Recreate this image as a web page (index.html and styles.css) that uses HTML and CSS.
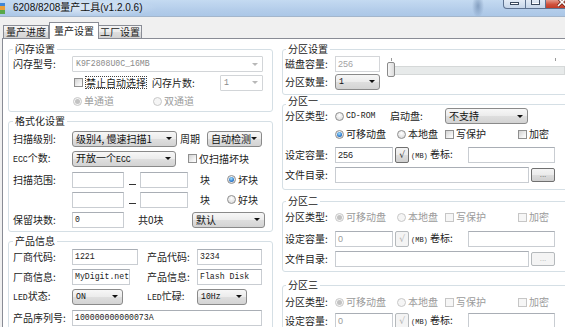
FILE: index.html
```html
<!DOCTYPE html>
<html lang="zh-CN">
<head>
    <meta charset="UTF-8">
    <meta name="viewport" content="width=device-width, initial-scale=1.0">
    <title>6208/8208量产工具(v1.2.0.6)</title>
    <link rel="stylesheet" href="styles.css">
</head>
<body>
<div class="window">
    <div class="titlebar">
        <span class="app-icon"></span>
        <span class="title">6208/8208量产工具(v1.2.0.6)</span>
        <div class="caption">
            <span class="cap cap-min"><i></i></span>
            <span class="cap cap-max"><i></i></span>
            <span class="cap cap-close">
                <svg width="10" height="8" viewBox="0 0 10 8"><path d="M1 -2 L9 6 M9 -2 L1 6" stroke="#5a1a10" stroke-width="3"/><path d="M1 -2 L9 6 M9 -2 L1 6" stroke="#fff" stroke-width="1.6"/></svg>
            </span>
        </div>
    </div>

    <div class="tabs">
        <span class="tab tab-1">量产进度</span>
        <span class="tab tab-2 active">量产设置</span>
        <span class="tab tab-3">工厂设置</span>
    </div>

    <div class="panel">
        <!-- 左侧 -->
        <div class="col col-left">
            <div class="group g-flash">
                <span class="legend">闪存设置</span>
                <div class="row h18">
                    <span class="key">闪存型号:</span>
                    <span class="combo off w191"><span class="mono">K9F2808U0C_16MB</span><i class="arrow"></i></span>
                </div>
                <div class="row h19">
                    <span class="key"></span>
                    <span class="opt w80"><i class="chk ml2"></i><span class="focus">禁止自动选择</span></span>
                    <span class="txt w68">闪存片数:</span>
                    <span class="combo off w43"><span class="mono">1</span><i class="arrow"></i></span>
                </div>
                <div class="row h18">
                    <span class="key"></span>
                    <span class="opt w81 dis"><i class="rad on ml1"></i>单通道</span>
                    <span class="opt dis"><i class="rad"></i>双通道</span>
                </div>
            </div>

            <div class="group g-format">
                <span class="legend">格式化设置</span>
                <div class="row h19">
                    <span class="key">扫描级别:</span>
                    <span class="combo w105">级别4, 慢速扫描1<i class="arrow"></i></span>
                    <span class="txt w30 pl3">周期</span>
                    <span class="combo w55">自动检测<i class="arrow"></i></span>
                </div>
                <div class="row h21">
                    <span class="key"><span class="mono">ECC</span>个数:</span>
                    <span class="combo w104"><span>开放一个<span class="mono">ECC</span></span><i class="arrow"></i></span>
                    <span class="opt ml12"><i class="chk"></i>仅扫描坏块</span>
                </div>
                <div class="row h21">
                    <span class="key">扫描范围:</span>
                    <span class="input w52"></span>
                    <span class="dash"></span>
                    <span class="input w48"></span>
                    <span class="txt ml12 w27">块</span>
                    <span class="opt"><i class="rad on"></i>坏块</span>
                </div>
                <div class="row h19">
                    <span class="key"></span>
                    <span class="input w52"></span>
                    <span class="dash"></span>
                    <span class="input w48"></span>
                    <span class="txt ml12 w27">块</span>
                    <span class="opt"><i class="rad"></i>好块</span>
                </div>
                <div class="row h21">
                    <span class="key">保留块数:</span>
                    <span class="input w52"><span class="mono">0</span></span>
                    <span class="txt ml14 w54">共0块</span>
                    <span class="combo w73">默认<i class="arrow"></i></span>
                </div>
            </div>

            <div class="group g-product">
                <span class="legend">产品信息</span>
                <div class="row h19">
                    <span class="key">厂商代码:</span>
                    <span class="input w66"><span class="mono">1221</span></span>
                    <span class="txt ml9 w50">产品代码:</span>
                    <span class="input w65"><span class="mono">3234</span></span>
                </div>
                <div class="row h21">
                    <span class="key">厂商信息:</span>
                    <span class="input w58"><span class="mono">MyDigit.net</span></span>
                    <span class="txt ml17 w50">产品信息:</span>
                    <span class="input w65"><span class="mono">Flash Disk</span></span>
                </div>
                <div class="row h19">
                    <span class="key"><span class="mono">LED</span>状态:</span>
                    <span class="combo w51"><span class="mono">ON</span><i class="arrow"></i></span>
                    <span class="txt ml24 w50"><span class="mono">LED</span>忙碌:</span>
                    <span class="combo w50"><span class="mono">10Hz</span><i class="arrow"></i></span>
                </div>
                <div class="row h24">
                    <span class="key">产品序列号:</span>
                    <span class="input w190"><span class="mono">100000000000073A</span></span>
                </div>
            </div>
        </div>

        <!-- 右侧 -->
        <div class="col col-right">
            <div class="group g-part">
                <span class="legend">分区设置</span>
                <div class="part-body">
                    <div class="part-fields">
                        <div class="row h17">
                            <span class="key">磁盘容量:</span>
                            <span class="input off w45">256</span>
                        </div>
                        <div class="row h19">
                            <span class="key">分区数量:</span>
                            <span class="combo w45"><span class="mono">1</span><i class="arrow"></i></span>
                        </div>
                    </div>
                    <div class="slider">
                        <div class="ticks"><i></i><i></i></div>
                        <div class="track"></div>
                        <span class="thumb"></span>
                    </div>
                </div>
            </div>

            <div class="group g-p1">
                <span class="legend">分区一</span>
                <div class="row h16">
                    <span class="key">分区类型:</span>
                    <span class="opt w55"><i class="rad"></i><span class="mono">CD-ROM</span></span>
                    <span class="txt w55">启动盘:</span>
                    <span class="combo w83">不支持<i class="arrow"></i></span>
                </div>
                <div class="row h20">
                    <span class="key"></span>
                    <span class="opt w62"><i class="rad on"></i>可移动盘</span>
                    <span class="opt w48"><i class="rad"></i>本地盘</span>
                    <span class="opt w73"><i class="chk"></i>写保护</span>
                    <span class="opt"><i class="chk"></i>加密</span>
                </div>
                <div class="row h21">
                    <span class="key">设定容量:</span>
                    <span class="input w58">256</span>
                    <span class="btn check ml2">√</span>
                    <span class="txt ml2 w57"><span class="mb">(MB)</span> 卷标:</span>
                    <span class="input w87"></span>
                </div>
                <div class="row h20">
                    <span class="key">文件目录:</span>
                    <span class="input w194"></span>
                    <span class="btn more ml2">...</span>
                </div>
            </div>

            <div class="group g-p2">
                <span class="legend">分区二</span>
                <div class="row h18">
                    <span class="key">分区类型:</span>
                    <span class="opt w62 dis"><i class="rad on"></i>可移动盘</span>
                    <span class="opt w48 dis"><i class="rad"></i>本地盘</span>
                    <span class="opt w73 dis"><i class="chk"></i>写保护</span>
                    <span class="opt dis"><i class="chk"></i>加密</span>
                </div>
                <div class="row h20 mt3">
                    <span class="key">设定容量:</span>
                    <span class="input w58 dim">0</span>
                    <span class="btn check ml2 off">√</span>
                    <span class="txt ml2 w57"><span class="mb">(MB)</span> 卷标:</span>
                    <span class="input w87"></span>
                </div>
                <div class="row h19">
                    <span class="key">文件目录:</span>
                    <span class="input w194"></span>
                    <span class="btn more ml2 off">...</span>
                </div>
            </div>

            <div class="group g-p3">
                <span class="legend">分区三</span>
                <div class="row h18">
                    <span class="key">分区类型:</span>
                    <span class="opt w62 dis"><i class="rad on"></i>可移动盘</span>
                    <span class="opt w48 dis"><i class="rad"></i>本地盘</span>
                    <span class="opt w73 dis"><i class="chk"></i>写保护</span>
                    <span class="opt dis"><i class="chk"></i>加密</span>
                </div>
                <div class="row h19">
                    <span class="key">设定容量:</span>
                    <span class="input w58 dim">0</span>
                    <span class="btn check ml2 off">√</span>
                    <span class="txt ml2 w57"><span class="mb">(MB)</span> 卷标:</span>
                    <span class="input w87"></span>
                </div>
            </div>
        </div>
    </div>
</div>
</body>
</html>
```

FILE: styles.css
```css
* {
    box-sizing: border-box;
}
body {
    margin: 0;
    width: 565px;
    height: 327px;
    overflow: hidden;
    background: #f0f0f0;
    font-family: "Noto Sans CJK SC", "Noto Sans", sans-serif;
    font-size: 10px;
    line-height: 12px;
    color: #222;
}
i {
    font-style: normal;
}

/* 标题栏 */
.titlebar {
    height: 17px;
    display: flex;
    align-items: flex-start;
    overflow: hidden;
    border-bottom: 1px solid #a3b6cc;
    background:
        radial-gradient(ellipse 80px 10px at 78px 8px, rgba(255, 255, 255, 0.5), rgba(255, 255, 255, 0)),
        radial-gradient(ellipse 6px 12px at 478px 6px, rgba(80, 110, 150, 0.5), rgba(80, 110, 150, 0)),
        linear-gradient(#c4daf1, #b4cdea 60%, #abc7e7);
}
.app-icon {
    width: 5px;
    height: 11px;
    margin-top: 3px;
    background: linear-gradient(#3f86d6 0 30%, #e9a03a 30% 60%, #58a84a 60%);
}
.title {
    margin: 2px 0 0 8px;
    font-family: "Liberation Sans", "Noto Sans CJK SC", sans-serif;
    font-size: 10px;
    line-height: 12px;
    color: #111;
}
.caption {
    margin-left: auto;
    margin-right: -16px;
    display: flex;
}
.cap {
    height: 9px;
    border: 1px solid #5d7290;
    border-top: none;
    display: flex;
    justify-content: center;
}
.cap-min {
    width: 23px;
    border-radius: 0 0 0 4px;
    background: linear-gradient(#e2ebf5, #c6d6e9);
}
.cap-min i {
    width: 9px;
    height: 3px;
    margin-top: 2px;
    border: 1px solid #3b4a5e;
    background: #fff;
}
.cap-max {
    width: 20px;
    border-left: none;
    background: linear-gradient(#e2ebf5, #c6d6e9);
}
.cap-max i {
    width: 9px;
    height: 5px;
    border: 1px solid #3b4a5e;
    border-top: none;
    box-shadow: inset 0 -1px 0 #fff;
}
.cap-close {
    width: 35px;
    border-left: none;
    justify-content: flex-start;
    padding-left: 11px;
    background: linear-gradient(#e49a8b, #d0513c 55%, #c23d28);
}
.cap-close svg {
    display: block;
}

/* 选项卡 */
.tabs {
    height: 21px;
    display: flex;
    align-items: flex-end;
    padding-left: 3px;
}
.tab {
    height: 13px;
    border: 1px solid #898c95;
    border-bottom: none;
    background: linear-gradient(#f4f4f4, #ebebeb 50%, #dedede 51%, #d3d3d3);
    text-align: center;
    line-height: 12px;
    flex: none;
}
.tab-1 {
    width: 46px;
}
.tab-2 {
    width: 50px;
}
.tab-3 {
    width: 43px;
    border-left: none;
}
.tab.active {
    position: relative;
    height: 17px;
    margin-bottom: -1px;
    padding-top: 2px;
    background: #fff;
}

/* 主面板 */
.panel {
    display: flex;
    gap: 9px;
    height: 289px;
    margin-left: 2px;
    padding: 10px 0 0 5px;
    background: #fff;
    border-top: 1px solid #898c95;
    border-left: 1px solid #898c95;
    overflow: hidden;
}
.col {
    flex: none;
}
.col-left {
    width: 265px;
}
.col-right {
    width: 300px;
}

.group {
    border: 1px solid #d5dfe5;
    border-radius: 3px;
    padding-left: 4px;
}
.col-right .group {
    padding-left: 2px;
}
.legend {
    display: block;
    width: max-content;
    height: 10px;
    line-height: 10px;
    margin: -6px 0 1px;
    padding: 0 2px;
    background: #fff;
}
.col-right .legend {
    margin-left: 1px;
}

.g-flash {
    padding-bottom: 1px;
}
.g-format {
    margin-top: 9px;
    padding-bottom: 1px;
}
.g-format .legend {
    margin-bottom: 3px;
}
.g-product {
    margin-top: 9px;
    height: 100px;
}
.g-part {
    padding-bottom: 3px;
}
.g-p1 {
    margin-top: 9px;
    padding-bottom: 4px;
}
.g-p1 .legend {
    margin-top: -9px;
    margin-bottom: 2px;
}
.g-p2 {
    margin-top: 11px;
    padding-bottom: 3px;
}
.g-p2 .legend {
    margin-bottom: 2px;
}
.g-p3 {
    margin-top: 13px;
    height: 60px;
}
.g-p3 .legend {
    margin-bottom: 3px;
}

/* 行 */
.row {
    display: flex;
    align-items: center;
    white-space: nowrap;
}
.h16 { height: 16px; }
.h17 { height: 17px; }
.h18 { height: 18px; }
.h19 { height: 19px; }
.h20 { height: 20px; }
.h21 { height: 21px; }
.h24 { height: 24px; }

.key {
    width: 59px;
    flex: none;
}
.col-right .key {
    width: 50px;
}
.txt {
    flex: none;
}
.mono {
    font-family: "Liberation Mono", "DejaVu Sans Mono", monospace;
    font-size: 8.2px;
}
.mb {
    font-family: "Liberation Mono", monospace;
    font-size: 7px;
}

.w27 { width: 27px; }
.w30 { width: 30px; }
.w43 { width: 43px; }
.w45 { width: 45px; }
.w48 { width: 48px; }
.w50 { width: 50px; }
.w51 { width: 51px; }
.w52 { width: 52px; }
.w54 { width: 54px; }
.w55 { width: 55px; }
.w57 { width: 57px; }
.w58 { width: 58px; }
.w62 { width: 62px; }
.w65 { width: 65px; }
.w66 { width: 66px; }
.w68 { width: 68px; }
.w73 { width: 73px; }
.w80 { width: 80px; }
.w81 { width: 81px; }
.w83 { width: 83px; }
.w87 { width: 87px; }
.w104 { width: 104px; }
.w105 { width: 105px; }
.w190 { width: 190px; }
.w191 { width: 191px; }
.w194 { width: 194px; }
.ml1 { margin-left: 1px; }
.ml2 { margin-left: 2px; }
.ml9 { margin-left: 9px; }
.ml12 { margin-left: 12px; }
.ml14 { margin-left: 14px; }
.ml17 { margin-left: 17px; }
.ml24 { margin-left: 24px; }
.pl3 { padding-left: 3px; }
.mt3 { margin-top: 3px; }

/* 控件 */
.input {
    height: 16px;
    flex: none;
    display: flex;
    align-items: center;
    padding: 0 2px;
    overflow: hidden;
    border: 1px solid #c9cdd2;
    border-top-color: #a9aeb5;
    background: #fff;
    font-family: "Liberation Sans", sans-serif;
    font-size: 9px;
    color: #222;
}
.input.off {
    border-color: #d4d6d9;
    color: #a3a3a3;
}
.input.dim {
    color: #9a9a9a;
}

.combo {
    height: 16px;
    flex: none;
    display: flex;
    align-items: center;
    justify-content: space-between;
    padding: 0 4px 0 3px;
    overflow: hidden;
    border: 1px solid #8a8a8a;
    border-radius: 3px;
    background: linear-gradient(#f7f7f7, #ececec 48%, #dedede 52%, #d3d3d3);
    color: #111;
}
.combo.off {
    border-color: #d2d5d8;
    border-radius: 1px;
    background: #fff;
    color: #8a8a8a;
}
.arrow {
    width: 0;
    height: 0;
    flex: none;
    border-left: 3px solid transparent;
    border-right: 3px solid transparent;
    border-top: 3px solid #111;
}
.combo.off .arrow {
    border-top-color: #b8b8b8;
}

.opt {
    display: flex;
    align-items: center;
    flex: none;
}
.opt.dis {
    color: #9b9b9b;
}
.chk {
    width: 9px;
    height: 9px;
    flex: none;
    margin-right: 2px;
    border: 1px solid #8f8f8f;
    background: linear-gradient(135deg, #d2d2d2, #f4f4f4 70%, #fff);
}
.dis .chk {
    border-color: #c6c6c6;
    background: #f6f6f6;
}
.focus {
    border: 1px dotted #444;
    line-height: 11px;
}
.rad {
    width: 9px;
    height: 9px;
    flex: none;
    margin-right: 2px;
    border: 1px solid #8f8f8f;
    border-radius: 50%;
    background: radial-gradient(circle at 50% 35%, #fff, #d4d4d4);
    display: flex;
    align-items: center;
    justify-content: center;
}
.rad.on::after {
    content: "";
    width: 5px;
    height: 5px;
    border-radius: 50%;
    background: radial-gradient(circle at 45% 35%, #a8e3fb, #2b7ad0 60%, #1a539d);
}
.dis .rad {
    border-color: #c8c8c8;
    background: #f5f5f5;
}
.dis .rad.on::after {
    background: #c2c2c2;
}

.dash {
    width: 16px;
    align-self: stretch;
    flex: none;
    display: flex;
    justify-content: center;
    align-items: flex-end;
    padding-bottom: 5px;
}
.dash::before {
    content: "";
    width: 7px;
    height: 1px;
    background: #333;
}

.btn {
    flex: none;
    display: flex;
    align-items: center;
    justify-content: center;
    border: 1px solid #707070;
    border-radius: 2px;
    background: linear-gradient(#f4f4f4, #ebebeb 48%, #dddddd 52%, #cfcfcf);
    color: #333;
}
.btn.check {
    width: 14px;
    height: 16px;
    font-family: "DejaVu Sans", sans-serif;
    font-size: 9px;
}
.btn.more {
    width: 24px;
    height: 14px;
    font-family: "Liberation Sans", sans-serif;
    font-size: 8px;
    color: #666;
}
.btn.off {
    border-color: #b5b9bc;
    background: #f4f4f4;
    color: #b0b0b0;
}

/* 分区设置 滑块 */
.part-body {
    display: flex;
}
.slider {
    position: relative;
    width: 178px;
    margin-left: 7px;
    padding-top: 3px;
}
.ticks {
    display: flex;
    justify-content: space-between;
    height: 3px;
    padding: 0 9px 0 4px;
}
.ticks i {
    width: 1px;
    height: 3px;
    background: #9a9a9a;
}
.track {
    height: 9px;
    margin: 5px 0 0 5px;
    border: 1px solid #d5d8d8;
    background: #e7eaea;
}
.thumb {
    position: absolute;
    left: 0;
    top: 7px;
    width: 8px;
    height: 15px;
    border: 1px solid #8a8a8a;
    border-radius: 2px;
    background: linear-gradient(90deg, #f6f6f6, #dcdcdc);
}
```
